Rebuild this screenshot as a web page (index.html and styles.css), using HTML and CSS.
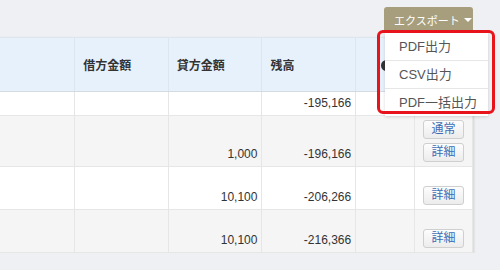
FILE: index.html
```html
<!DOCTYPE html>
<html lang="ja">
<head>
    <meta charset="UTF-8">
    <title>仕訳帳</title>
    <link rel="stylesheet" href="styles.css">
</head>
<body>
    <div class="page">
        <!-- ツールバー -->
        <div class="toolbar">
            <div class="export">
                <button class="export-btn">エクスポート <span class="caret"></span></button>
                <ul class="export-menu">
                    <li>PDF出力</li>
                    <li>CSV出力</li>
                    <li>PDF一括出力</li>
                </ul>
                <div class="highlight"></div>
            </div>
        </div>

        <!-- 明細テーブル -->
        <table class="ledger">
            <thead>
                <tr>
                    <th class="col-desc"></th>
                    <th class="col-amt">借方金額</th>
                    <th class="col-amt">貸方金額</th>
                    <th class="col-amt">残高</th>
                    <th class="col-note"><span class="help-icon"></span></th>
                    <th class="col-act"></th>
                </tr>
            </thead>
            <tbody>
                <tr class="row-a">
                    <td></td>
                    <td></td>
                    <td></td>
                    <td class="num">-195,166</td>
                    <td></td>
                    <td></td>
                </tr>
                <tr class="row-b tall">
                    <td></td>
                    <td></td>
                    <td class="num">1,000</td>
                    <td class="num">-196,166</td>
                    <td></td>
                    <td class="act">
                        <div class="btn-stack">
                            <button class="btn">通常</button>
                            <button class="btn">詳細</button>
                        </div>
                    </td>
                </tr>
                <tr class="row-a mid">
                    <td></td>
                    <td></td>
                    <td class="num">10,100</td>
                    <td class="num">-206,266</td>
                    <td></td>
                    <td class="act"><button class="btn">詳細</button></td>
                </tr>
                <tr class="row-b mid">
                    <td></td>
                    <td></td>
                    <td class="num">10,100</td>
                    <td class="num">-216,366</td>
                    <td></td>
                    <td class="act"><button class="btn">詳細</button></td>
                </tr>
            </tbody>
        </table>
    </div>
</body>
</html>
```

FILE: styles.css
```css
body {
    background-color: #eef0f4;
    color: #333;
    font-family: "Liberation Sans", "Noto Sans CJK JP", sans-serif;
    font-size: 12px;
    margin: 0;
    overflow: hidden;
}
.page {
    width: 473px;
}
.toolbar {
    display: flex;
    justify-content: flex-end;
    padding-top: 7px;
    height: 30px;
}
.export {
    position: relative;
}
.export-btn {
    display: flex;
    align-items: center;
    gap: 4px;
    width: 89px;
    height: 26px;
    padding: 0 0 0 10px;
    background-color: #a69e7c;
    color: #fff;
    border: none;
    border-radius: 3px 3px 0 0;
    font-family: "Liberation Sans", "Noto Sans CJK JP", sans-serif;
    font-size: 11px;
    white-space: nowrap;
}
.caret {
    width: 0;
    height: 0;
    border-left: 4px solid transparent;
    border-right: 4px solid transparent;
    border-top: 4px solid #fff;
}
.export-menu {
    position: absolute;
    top: 26px;
    left: 1px;
    width: 103px;
    margin: 0;
    padding: 0;
    list-style: none;
    background-color: #fff;
    box-shadow: 0 1px 3px rgba(0, 0, 0, 0.15);
    z-index: 2;
}
.export-menu li {
    height: 27px;
    line-height: 27px;
    padding-left: 14px;
    color: #555;
    font-size: 13px;
    border-bottom: 1px solid #e6e6e6;
}
.export-menu li:first-child {
    height: 26px;
    line-height: 26px;
    padding-top: 1px;
}
.export-menu li:last-child {
    border-bottom: none;
}
.highlight {
    position: absolute;
    top: 23px;
    left: -7px;
    width: 112px;
    height: 78px;
    border: 3px solid #e8141c;
    border-radius: 6px;
    z-index: 3;
}
.ledger {
    margin-left: -30px;
    border-collapse: collapse;
    background-color: #fff;
    box-shadow: 1px 1px 2px rgba(0, 0, 0, 0.12);
}
.ledger th {
    height: 54px;
    padding: 0 8px;
    background-color: #e7f1fc;
    border: 1px solid #dde5ee;
    border-bottom: 1px solid #d4dbe3;
    text-align: left;
    font-weight: bold;
    font-size: 12px;
    vertical-align: middle;
}
.ledger td {
    border: 1px solid #e6e6e6;
    padding: 0 4px 5px 8px;
    vertical-align: bottom;
    line-height: 14px;
}
.col-desc { width: 105px; box-sizing: border-box; }
.col-amt { width: 94px; box-sizing: border-box; }
.col-note { width: 59px; box-sizing: border-box; }
.col-act { width: 58px; box-sizing: border-box; }
.row-a { background-color: #fff; height: 24px; }
.row-b { background-color: #f5f5f5; }
.tall { height: 51px; }
.mid { height: 43px; }
.num {
    text-align: right;
    color: #333;
}
.ledger td.act {
    padding: 0 0 4px 0;
    text-align: center;
}
.btn-stack {
    display: flex;
    flex-direction: column;
    align-items: center;
    gap: 4px;
}
.btn {
    width: 41px;
    height: 19px;
    padding: 0;
    background: linear-gradient(#fdfdfd, #ececec);
    border: 1px solid #cfcfcf;
    border-radius: 3px;
    color: #3d6db5;
    font-family: "Liberation Sans", "Noto Sans CJK JP", sans-serif;
    font-size: 12px;
    line-height: 17px;
}
.help-icon {
    display: inline-block;
    width: 11px;
    height: 11px;
    margin-left: 17px;
    border-radius: 50%;
    background-color: #333;
    vertical-align: middle;
}
```
